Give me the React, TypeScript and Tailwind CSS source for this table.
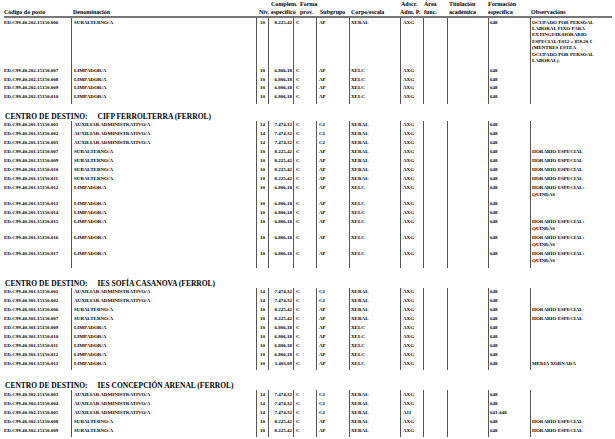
import React from "react";

type Row = {
  code: string;
  den: string;
  niv: string;
  comp: string;
  sub: string;
  corpo: string;
  ads: string;
  form: string;
  obs?: string[];
};

const aux = (code: string, ads = "AXG", form = "648"): Row => ({
  code,
  den: "AUXILIAR ADMINISTRATIVO/A",
  niv: "14",
  comp: "7.474,32",
  sub: "C2",
  corpo: "XERAL",
  ads,
  form,
});

const subal = (code: string, obs?: string[]): Row => ({
  code,
  den: "SUBALTERNO/A",
  niv: "10",
  comp: "8.225,42",
  sub: "AP",
  corpo: "XERAL",
  ads: "AXG",
  form: "648",
  obs,
});

const limp = (code: string, obs?: string[], comp = "6.806,18"): Row => ({
  code,
  den: "LIMPADOR/A",
  niv: "10",
  comp,
  sub: "AP",
  corpo: "XELC",
  ads: "AXG",
  form: "648",
  obs,
});

const HE = ["HORARIO ESPECIAL"];
const HQ = ["HORARIO ESPECIAL:", "QUINDAS"];

const sections: { title?: string; gap?: string; rows: Row[] }[] = [
  {
    rows: [
      subal("ED.C99.40.202.15150.006", [
        "OCUPADO POR PERSOAL",
        "LABORAL FIXO PARA",
        "EXTINGUIR/HORARIO",
        "ESPECIAL/E012 = 859,20 €",
        "(MENTRES ESTEA",
        "OCUPADO POR PERSOAL",
        "LABORAL).",
      ]),
      limp("ED.C99.40.202.15150.007"),
      limp("ED.C99.40.202.15150.008"),
      limp("ED.C99.40.202.15150.009"),
      limp("ED.C99.40.202.15150.010"),
    ],
  },
  {
    title: "CIFP FERROLTERRA (FERROL)",
    gap: "mt-[8px]",
    rows: [
      aux("ED.C99.40.201.15150.001"),
      aux("ED.C99.40.201.15150.002"),
      aux("ED.C99.40.201.15150.003"),
      subal("ED.C99.40.201.15150.007", HE),
      subal("ED.C99.40.201.15150.009", HE),
      subal("ED.C99.40.201.15150.010", HE),
      subal("ED.C99.40.201.15150.011", HE),
      limp("ED.C99.40.201.15150.012", HQ),
      limp("ED.C99.40.201.15150.013"),
      limp("ED.C99.40.201.15150.014"),
      limp("ED.C99.40.201.15150.015", HQ),
      limp("ED.C99.40.201.15150.016", HQ),
      limp("ED.C99.40.201.15150.017", HQ),
    ],
  },
  {
    title: "IES SOFÍA CASANOVA (FERROL)",
    gap: "mt-[11px]",
    rows: [
      aux("ED.C99.40.301.15150.001"),
      aux("ED.C99.40.301.15150.002"),
      subal("ED.C99.40.301.15150.006", HE),
      subal("ED.C99.40.301.15150.007", HE),
      limp("ED.C99.40.301.15150.009"),
      limp("ED.C99.40.301.15150.010"),
      limp("ED.C99.40.301.15150.011"),
      limp("ED.C99.40.301.15150.012"),
      limp("ED.C99.40.301.15150.013", ["MEDIA XORNADA"], "3.403,09"),
    ],
  },
  {
    title: "IES CONCEPCIÓN ARENAL (FERROL)",
    gap: "mt-[11px]",
    rows: [
      aux("ED.C99.40.302.15150.003"),
      aux("ED.C99.40.302.15150.004"),
      aux("ED.C99.40.302.15150.005", "A11", "641-648"),
      subal("ED.C99.40.302.15150.008", HE),
      subal("ED.C99.40.302.15150.009", HE),
    ],
  },
];

const grid =
  "grid grid-cols-[67px_185px_12px_25px_23px_33px_51px_23px_24px_41px_42px_1fr]";
const cell = "border-l border-[#555] py-[1.6px]";

function DataRow({ r }: { r: Row }) {
  // wrapped notes are set a little looser than single lines
  const line = (r.obs?.length ?? 0) > 1 ? "h-[6.4px]" : "h-[5.8px]";
  return (
    <div className={`${grid} leading-[5.8px] text-[5px]`}>
      <div className="py-[1.6px] whitespace-nowrap">{r.code}</div>
      <div className={`${cell} pl-[2px] whitespace-nowrap`}>{r.den}</div>
      <div className={`${cell} text-center`}>{r.niv}</div>
      <div className={`${cell} pr-[1px] text-right`}>{r.comp}</div>
      <div className={`${cell} pl-[2px]`}>C</div>
      <div className={`${cell} pl-[2px]`}>{r.sub}</div>
      <div className={`${cell} pl-[1px]`}>{r.corpo}</div>
      <div className={`${cell} pl-[2px]`}>{r.ads}</div>
      <div className={cell} />
      <div className={cell} />
      <div className={`${cell} pl-[1px] whitespace-nowrap`}>{r.form}</div>
      <div className={`${cell} pl-[1px]`}>
        {(r.obs ?? [""]).map((l, i) => (
          <div key={i} className={`${line} whitespace-nowrap`}>
            {l}
          </div>
        ))}
      </div>
    </div>
  );
}

function Spacer() {
  return (
    <div className={`${grid} h-[2px]`}>
      <div />
      {Array.from({ length: 11 }).map((_, i) => (
        <div key={i} className="border-l border-[#555]" />
      ))}
    </div>
  );
}

function Header() {
  const h = "flex flex-col justify-end whitespace-nowrap";
  return (
    <>
      <div className={`${grid} h-[16px] text-[6px] leading-[8px]`}>
        <div className={h}>Código do posto</div>
        <div className={`${h} pl-[2px]`}>Denominación</div>
        <div className={`${h} pl-[3px]`}>Niv.</div>
        <div className={`${h} pl-[3px]`}>
          <span>Complem.</span>
          <span>específico</span>
        </div>
        <div className={`${h} pl-[7px]`}>
          <span>Forma</span>
          <span>prov.</span>
        </div>
        <div className={`${h} pl-[4px]`}>Subgrupo</div>
        <div className={`${h} pl-[2px]`}>Corpo/escala</div>
        <div className={h}>
          <span className="pl-[1px]">Adscr.</span>
          <span>Adm. P.</span>
        </div>
        <div className={`${h} pl-[1px]`}>
          <span>Área</span>
          <span>func.</span>
        </div>
        <div className={`${h} pl-[2px]`}>
          <span>Titulación</span>
          <span>académica</span>
        </div>
        <div className={h}>
          <span>Formación</span>
          <span>específica</span>
        </div>
        <div className={`${h} pl-[1px]`}>Observacións</div>
      </div>
      <div className="h-[2px] bg-[#777]" />
    </>
  );
}

export default function App() {
  return (
    <div className="h-[439px] w-[615px] overflow-hidden bg-white pl-[4px] pr-[3px] font-['Liberation_Serif',serif] font-bold text-black">
      <Header />
      {sections.map((s, i) => (
        <div key={i}>
          {s.title && (
            <div className={`${s.gap} flex h-[9px] items-center pl-[1px] text-[7.5px] leading-[9px] whitespace-nowrap`}>
              <span>CENTRO DE DESTINO:</span>
              <span className="ml-[10px]">{s.title}</span>
            </div>
          )}
          {s.rows.map((r) => (
            <DataRow key={r.code} r={r} />
          ))}
          <Spacer />
        </div>
      ))}
    </div>
  );
}
